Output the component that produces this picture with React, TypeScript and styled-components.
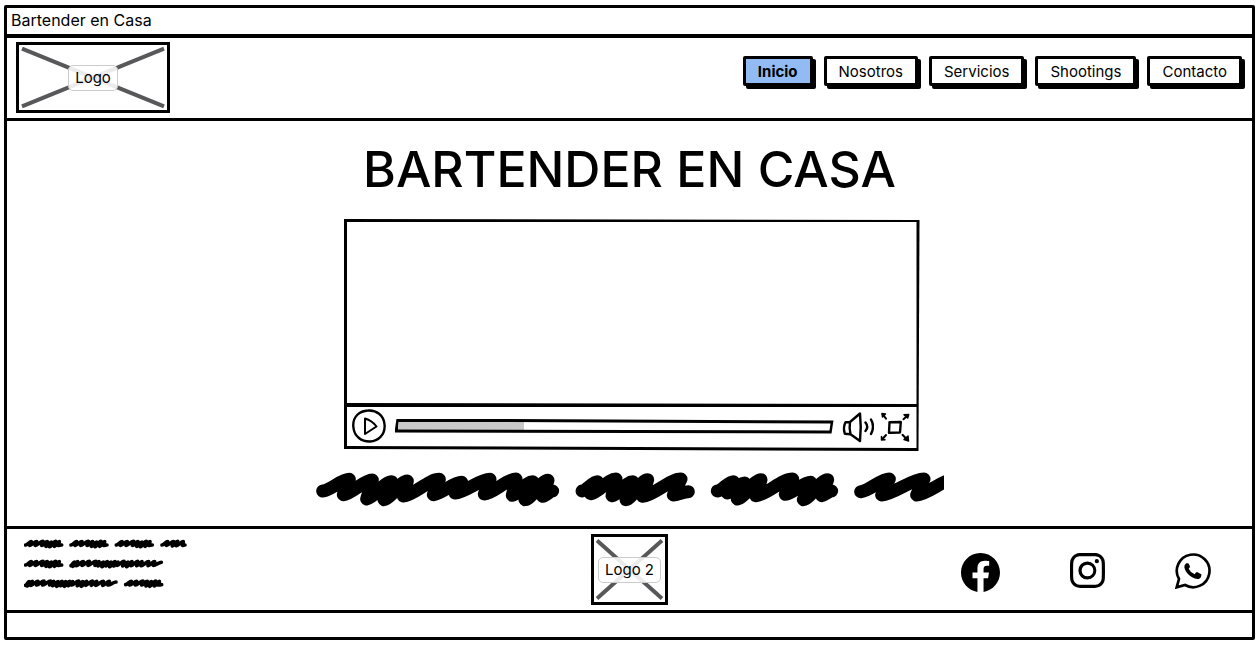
import React from "react";
import styled, { createGlobalStyle, css } from "styled-components";
import { BsFacebook, BsInstagram } from "react-icons/bs";

const INK = "#000";

const GlobalStyle = createGlobalStyle`
  *, *::before, *::after { box-sizing: border-box; }
  body {
    margin: 0;
    background: #fff;
    color: ${INK};
    font-family: Inter, "Liberation Sans", sans-serif;
    font-size: 15px;
    line-height: 20px;
  }
`;

const Window = styled.div`
  margin: 5px 5px 5px 4px;
  border: 3px solid ${INK};
  border-radius: 2px;
`;

const TitleBar = styled.div`
  padding: 2px 4px 4px;
  border-bottom: 4px solid ${INK};
  font-size: 16px;
`;

const Header = styled.header`
  display: flex;
  flex-wrap: wrap;
  justify-content: space-between;
  align-items: flex-start;
  padding: 4px 10px 5px 9px;
  border-bottom: 3px solid ${INK};
`;

const Placeholder = styled.div<{ $width: number }>`
  position: relative;
  display: flex;
  align-items: center;
  justify-content: center;
  width: ${(p) => p.$width}px;
  height: 71px;
  border: 3px solid ${INK};
`;

const Cross = styled.svg`
  position: absolute;
  inset: 3px;
  width: calc(100% - 6px);
  height: calc(100% - 6px);
  overflow: visible;
  stroke: #58585a;
  stroke-width: 4;
`;

const PlaceholderLabel = styled.span`
  position: relative;
  padding: 2px 6px;
  border: 1px solid #ccc;
  border-radius: 5px;
  background: rgba(255, 255, 255, 0.88);
`;

const Nav = styled.nav`
  display: flex;
  flex-wrap: wrap;
  gap: 11px;
  padding-top: 14px;
`;

const NavLink = styled.a<{ $active?: boolean }>`
  padding: 3px 12px 1px;
  border: 3px solid ${INK};
  border-radius: 2px;
  box-shadow: 3px 3px 0 ${INK};
  background: #fff;
  color: ${INK};
  text-decoration: none;
  ${(p) =>
    p.$active &&
    css`
      background: #92bbf3;
      font-weight: 700;
    `}
`;

const Main = styled.main`
  display: flex;
  flex-direction: column;
  align-items: center;
  padding: 18px 16px 19px;
`;

const Title = styled.h1`
  margin: 0 0 20px;
  font-size: 50px;
  line-height: 60px;
  font-weight: 500;
  text-align: center;
`;

const Feature = styled.section`
  display: flex;
  flex-direction: column;
  gap: 20px;
  width: 100%;
  max-width: 628px;
`;

const Player = styled.div`
  margin: 0 24px 0 28px;
  padding: 3px;
  background: ${INK};
  clip-path: polygon(0 0, 100% 1px, calc(100% - 1px) 100%, 0 calc(100% - 2px));
`;

const Screen = styled.div`
  height: 182px;
  background: #fff;
  clip-path: polygon(0 -1px, 100% 0, 100% 100%, 0 calc(100% - 1px));
`;

const Controls = styled.div`
  display: flex;
  align-items: center;
  gap: 6px;
  height: 41px;
  margin-top: 3px;
  padding: 0 7px 3px 5px;
  background: #fff;
  clip-path: polygon(0 -1px, 100% 0, 100% 100%, 0 calc(100% - 2px));
`;

const IconButton = styled.button`
  display: flex;
  flex: none;
  padding: 0;
  border: 0;
  background: none;
  color: inherit;
`;

const Track = styled.div`
  display: flex;
  flex: 1;
  min-width: 0;
  margin-left: 3px;
  padding: 3px;
  background: ${INK};
  clip-path: polygon(2px 0, 100% 2px, calc(100% - 2px) 100%, 0 calc(100% - 1px));
`;

const Seek = styled.input`
  appearance: none;
  flex: 1;
  min-width: 0;
  height: 9px;
  margin: 0;
  background: linear-gradient(to right, #c9c9c9 29%, #fff 29%);
  clip-path: polygon(1px 0, 100% 2px, calc(100% - 1px) 100%, 0 calc(100% - 1px));
  &::-webkit-slider-thumb {
    appearance: none;
    width: 1px;
    height: 9px;
  }
`;

const Drawing = styled.svg`
  display: block;
  flex: none;
  fill: none;
  stroke: currentColor;
  stroke-linecap: round;
  stroke-linejoin: round;
`;

const Headline = styled(Drawing)`
  width: 100%;
  height: auto;
  stroke-width: 39;
`;

const Footer = styled.footer`
  display: grid;
  grid-template-columns: 1fr auto 1fr;
  padding: 5px 0;
  border-top: 3px solid ${INK};
  border-bottom: 3px solid ${INK};
`;

const Address = styled.div`
  padding: 4px 0 0 17px;
`;

const Social = styled.nav`
  display: flex;
  align-items: flex-start;
  justify-content: flex-end;
  gap: 70px;
  padding: 19px 41px 0 0;
`;

const SocialLink = styled.a`
  display: flex;
  color: ${INK};
`;

const StatusBar = styled.div`
  height: 24px;
`;

/* Joins low and high points with slanted pen strokes that ease into each peak. */
function pen(...points: number[]) {
  let d = `M${points[0]} ${points[1]}`;
  for (let i = 2; i < points.length; i += 2) {
    const [x0, y0, x1, y1] = points.slice(i - 2, i + 2);
    const run = x1 - x0;
    d +=
      run > 0
        ? `C${x0 + run * 0.3} ${y0 + (y1 - y0) * 0.05} ${x1 - run * 0.3} ${y1} ${x1} ${y1}`
        : `L${x1} ${y1}`;
  }
  return d;
}

const headlineWords = [
  pen(38, 78, 118, 43, 100, 89, 187, 45, 170, 102, 245, 50, 222, 104, 292, 48, 280, 93, 388, 43, 370, 89, 455, 52, 435, 84, 540, 43, 523, 87, 618, 42, 607, 91, 668, 50, 645, 104, 714, 46, 698, 94, 728, 78),
  pen(816, 78, 862, 50, 842, 86, 918, 42, 906, 92, 968, 50, 948, 104, 1013, 44, 998, 94, 1113, 42, 1090, 90, 1135, 80),
  pen(1222, 78, 1270, 50, 1252, 84, 1304, 54, 1282, 102, 1353, 44, 1337, 92, 1448, 42, 1426, 88, 1502, 52, 1480, 104, 1553, 44, 1535, 92, 1565, 78),
  pen(1652, 80, 1738, 42, 1715, 90, 1842, 42, 1820, 90, 1935, 42),
];

const SHORT = pen(5, 19, 22, 9, 17, 20, 38, 9, 34, 20, 57, 8, 53, 20, 70, 9, 66, 23, 82, 10, 77, 24, 95, 8, 91, 23, 106, 9, 102, 20, 113, 19);
const TAIL = pen(5, 19, 22, 9, 18, 20, 40, 9, 36, 22, 52, 8, 48, 21, 69, 9, 66, 20, 74, 19);
const LONG = pen(5, 21, 15, 10, 10, 23, 25, 9, 20, 21, 42, 9, 38, 20, 60, 8, 56, 20, 80, 8, 77, 20, 89, 9, 86, 22, 102, 10, 98, 24, 114, 9, 110, 22, 125, 10, 121, 24, 137, 9, 133, 22, 146, 10, 143, 20, 164, 8, 160, 22, 176, 10, 172, 24, 188, 9, 185, 21, 205, 8, 202, 21, 218, 9, 215, 21, 238, 9, 236, 21, 256, 9, 252, 20, 276, 11);

const addressWords: [number, number, string][] = [
  [0, 2, SHORT], [136, 2, SHORT], [272, 2, SHORT], [409, 2, TAIL],
  [0, 62, SHORT], [136, 62, LONG],
  [0, 121, LONG], [300, 121, SHORT],
];

const navItems = ["Inicio", "Nosotros", "Servicios", "Shootings", "Contacto"];

function ImagePlaceholder({ label, width }: { label: string; width: number }) {
  return (
    <Placeholder $width={width}>
      <Cross aria-hidden="true">
        <line x1="0%" y1="1%" x2="100%" y2="99%" />
        <line x1="100%" y1="1%" x2="0%" y2="99%" />
      </Cross>
      <PlaceholderLabel>{label}</PlaceholderLabel>
    </Placeholder>
  );
}

function VideoPlayer() {
  return (
    <Player>
      <Screen />
      <Controls>
        <IconButton type="button" aria-label="Reproducir">
          <Drawing width="34" height="34" viewBox="0 0 34 34" strokeWidth="2.4">
            <path d="M16 1.500C24 .8 32 6 32.600 16S26 32.300 18 32.500 2 28 1.300 17.500 8 2 16 1.500z" />
            <path d="M13 9.500V25L24.500 17.500Q20 11.500 13 9.500z" strokeWidth="2" />
          </Drawing>
        </IconButton>
        <Track>
          <Seek type="range" aria-label="Progreso" min={0} max={100} defaultValue={29} />
        </Track>
        <IconButton type="button" aria-label="Volumen">
          <Drawing width="34" height="34" viewBox="-2 -1 34 34" strokeWidth="2.4">
            <path d="M8 12 3.500 12.300Q.800 17 2.800 23.700L8.500 24.200Q7 18 8 12L18 3.500Q19.500 17 18 31L8.500 24.200" />
            <path d="M23.500 12.500q3.500 4.500 0 8.500M29 9.500q4 7 0 14.500" />
          </Drawing>
        </IconButton>
        <IconButton type="button" aria-label="Pantalla completa">
          <Drawing width="30" height="34" viewBox="0 -2 30 34" strokeWidth="2">
            <path d="M9.500 11.300 20.800 11 20 21.500 9 21.800z" strokeWidth="2.4" />
            <path d="M2.500 3 6 7.700M27 5 23.500 8.300M2.500 28 6 24M27 28.500 22.500 23.700" />
            <path
              d="M2 2.500 5.500 3 2.500 6zM28.700 3.500 24 3.800 27.700 7zM28.500 30 28 25 24 28.500zM1.500 25.500V29L5 28.700"
              fill="currentColor"
              strokeWidth="1.500"
            />
          </Drawing>
        </IconButton>
      </Controls>
    </Player>
  );
}

export default function App() {
  return (
    <>
      <GlobalStyle />
      <Window>
        <TitleBar>Bartender en Casa</TitleBar>
        <Header>
          <ImagePlaceholder label="Logo" width={154} />
          <Nav>
            {navItems.map((item, i) => (
              <NavLink key={item} href={`#${item.toLowerCase()}`} $active={i === 0}>
                {item}
              </NavLink>
            ))}
          </Nav>
        </Header>
        <Main>
          <Title>BARTENDER EN CASA</Title>
          <Feature>
            <VideoPlayer />
            <Headline viewBox="18 18 1884 108" aria-hidden="true">
              {headlineWords.map((d) => (
                <path key={d} d={d} />
              ))}
            </Headline>
          </Feature>
        </Main>
        <Footer>
          <Address>
            <Drawing width="164" height="52" viewBox="0 0 492 156" strokeWidth="11" aria-hidden="true">
              {addressWords.map(([x, y, d]) => (
                <path key={`${x}-${y}`} d={d} transform={`translate(${x} ${y})`} />
              ))}
            </Drawing>
          </Address>
          <ImagePlaceholder label="Logo 2" width={77} />
          <Social>
            <SocialLink href="#facebook" aria-label="Facebook">
              <BsFacebook size={39} />
            </SocialLink>
            <SocialLink href="#instagram" aria-label="Instagram">
              <BsInstagram size={35} />
            </SocialLink>
            <SocialLink href="#whatsapp" aria-label="WhatsApp">
              <Drawing width="36" height="36" viewBox="707 99 108 108" strokeWidth="8">
                <path d="M719 177A49 49 0 1 1 737 195L712 202z" strokeLinejoin="miter" />
                <path
                  d="M741 130q-7 4-6 12c3 16 19 33 39 35q10 0 12-10v-4l-13-7q-4 1-7 7-12-5-18-17 5-4 4-7l-5-9z"
                  fill="currentColor"
                  stroke="none"
                />
              </Drawing>
            </SocialLink>
          </Social>
        </Footer>
        <StatusBar />
      </Window>
    </>
  );
}
